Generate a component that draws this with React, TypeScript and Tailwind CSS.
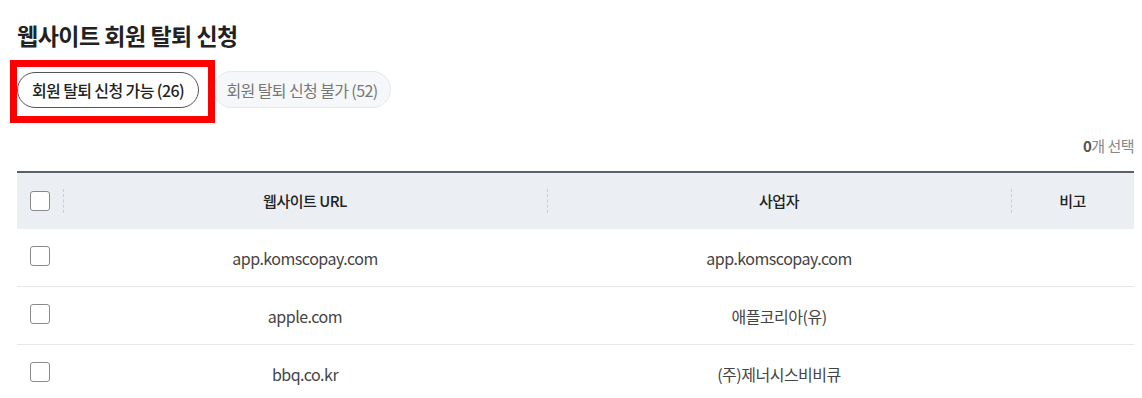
const rows = [
    { url: 'app.komscopay.com', owner: 'app.komscopay.com', note: '' },
    { url: 'apple.com', owner: '애플코리아(유)', note: '' },
    { url: 'bbq.co.kr', owner: '(주)제너시스비비큐', note: '' },
];

function CheckBox() {
    return <span className="block w-5 h-5 rounded-[3px] border-[1.5px] border-[#8a8a8a] bg-white" />;
}

function HeadCell({ children, divider = true }: { children?: React.ReactNode; divider?: boolean }) {
    return (
        <div className="relative flex items-center justify-center h-full">
            {divider && <span className="absolute left-0 top-1/2 -translate-y-1/2 h-[24px] border-l border-dashed border-[#c9cfd8]" />}
            {children}
        </div>
    );
}

export default function App() {
    return (
        <div
            className="min-h-screen bg-white pl-[17px] pr-[8px] pt-[19px] text-[#222]"
            style={{ fontFamily: '"Noto Sans CJK KR", "Noto Sans", sans-serif' }}
        >
            {/* Title */}
            <h1 className="text-[23px] font-bold leading-[32px] tracking-[-0.5px]">웹사이트 회원 탈퇴 신청</h1>

            {/* Tabs */}
            <div className="flex items-center gap-[14px] mt-[20px]">
                <div className="relative">
                    <button className="h-[36px] w-[182px] rounded-full border border-[#555] bg-white text-[16px] font-medium tracking-[-0.6px] text-[#222]">
                        회원 탈퇴 신청 가능 (26)
                    </button>
                    {/* annotation box */}
                    <span className="pointer-events-none absolute -left-[7px] -top-[12px] w-[205px] h-[63px] border-[7px] border-[#ff0000]" />
                </div>
                <button className="h-[37px] w-[178px] rounded-full border border-[#e6e8eb] bg-[#f6f7f8] text-[16px] tracking-[-0.6px] text-[#777]">
                    회원 탈퇴 신청 불가 (52)
                </button>
            </div>

            {/* Selected count */}
            <div className="flex justify-end mt-[28px] text-[15px] leading-[20px] text-[#888] tracking-[-0.5px]">
                <span><b className="font-bold text-[#555]">0</b>개 선택</span>
            </div>

            {/* Table */}
            <div className="mt-[15px] border-t-2 border-[#5c5f63]">
                <div className="grid grid-cols-[46px_484px_464px_1fr] h-[56px] bg-[#ebeef2] text-[15px] font-medium tracking-[-0.5px] text-[#222]">
                    <div className="flex items-center pl-[13px]"><CheckBox /></div>
                    <HeadCell>웹사이트 URL</HeadCell>
                    <HeadCell>사업자</HeadCell>
                    <HeadCell>비고</HeadCell>
                </div>
                {rows.map((r) => (
                    <div
                        key={r.url}
                        className="grid grid-cols-[46px_484px_464px_1fr] h-[58px] border-b border-[#e6e6e6] text-[16px] tracking-[-0.5px] text-[#444]"
                    >
                        <div className="flex items-center pl-[13px] pb-[4px]"><CheckBox /></div>
                        <div className="flex items-center justify-center">{r.url}</div>
                        <div className="flex items-center justify-center">{r.owner}</div>
                        <div className="flex items-center justify-center">{r.note}</div>
                    </div>
                ))}
            </div>
        </div>
    );
}
